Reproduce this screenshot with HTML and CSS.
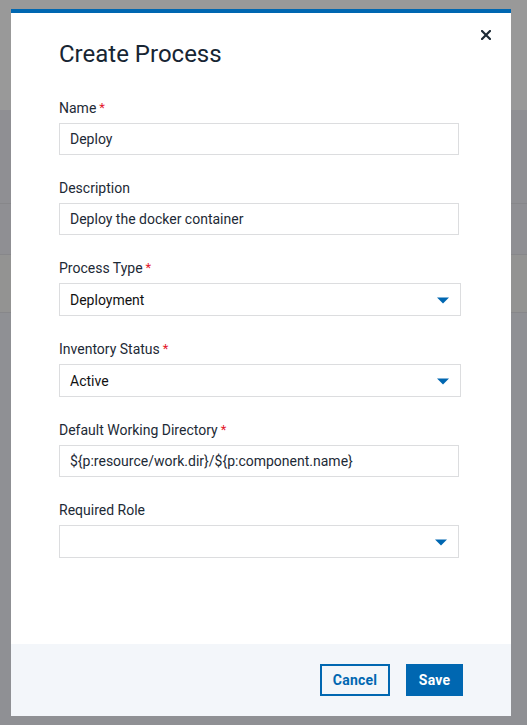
FILE: index.html
```html
<!DOCTYPE html>
<html lang="en">
<head>
<meta charset="utf-8">
<title>Create Process</title>
<link rel="stylesheet" href="styles.css">
</head>
<body>
<div class="page">
  <div class="band band-top"></div>
  <div class="band band-a"></div>
  <div class="band band-b"></div>
  <div class="band band-c"></div>
  <div class="band band-rest"></div>
</div>

<div class="modal" role="dialog" aria-label="Create Process">
  <button class="close" aria-label="Close">
    <svg width="10" height="10" viewBox="0 0 10 10"><path d="M1 1 L9 9 M9 1 L1 9" stroke="#1d2a36" stroke-width="2.2" stroke-linecap="square" fill="none"/></svg>
  </button>
  <div class="modal-body">
    <h1 class="title">Create Process</h1>

    <div class="field">
      <label class="label">Name<span class="req">*</span></label>
      <div class="input">Deploy</div>
    </div>

    <div class="field">
      <label class="label">Description</label>
      <div class="input">Deploy the docker container</div>
    </div>

    <div class="field">
      <label class="label">Process Type<span class="req">*</span></label>
      <div class="select wide">
        <span class="value">Deployment</span>
        <svg class="caret" width="12" height="7" viewBox="0 0 12 7"><path d="M0 0.5 H12 L6 6.5 Z" fill="#0067b1"/></svg>
      </div>
    </div>

    <div class="field">
      <label class="label">Inventory Status<span class="req">*</span></label>
      <div class="select wide">
        <span class="value">Active</span>
        <svg class="caret" width="12" height="7" viewBox="0 0 12 7"><path d="M0 0.5 H12 L6 6.5 Z" fill="#0067b1"/></svg>
      </div>
    </div>

    <div class="field">
      <label class="label">Default Working Directory<span class="req">*</span></label>
      <div class="input">${p:resource/work.dir}/${p:component.name}</div>
    </div>

    <div class="field">
      <label class="label">Required Role</label>
      <div class="select">
        <span class="value"></span>
        <svg class="caret" width="12" height="7" viewBox="0 0 12 7"><path d="M0 0.5 H12 L6 6.5 Z" fill="#0067b1"/></svg>
      </div>
    </div>
  </div>
  <div class="modal-footer">
    <button class="btn btn-secondary">Cancel</button>
    <button class="btn btn-primary">Save</button>
  </div>
</div>
</body>
</html>
```

FILE: styles.css
```css
* { box-sizing: border-box; }

html, body {
  margin: 0;
  padding: 0;
}

body {
  width: 527px;
  height: 725px;
  overflow: hidden;
  font-family: Roboto, "Liberation Sans", sans-serif;
  background: #8f9094;
  position: relative;
}

.page {
  display: flex;
  flex-direction: column;
}

.band { width: 100%; }
.band-top { height: 110px; background: #999999; }
.band-a { height: 94px; background: #8f8f93; border-bottom: 1px solid #87878a; }
.band-b { height: 51px; background: #8f8f93; border-bottom: 1px solid #87878a; }
.band-c { height: 58px; background: #939392; border-bottom: 1px solid #87878a; }
.band-rest { flex: 1; background: #8f9094; }

.modal {
  position: absolute;
  left: 11px;
  top: 9px;
  width: 500px;
  height: 707px;
  background: #ffffff;
  border-top: 4px solid #0067b1;
  display: flex;
  flex-direction: column;
}

.close {
  position: absolute;
  top: 17px;
  right: 20px;
  width: 10px;
  height: 10px;
  padding: 0;
  border: 0;
  background: none;
  display: flex;
}

.modal-body {
  flex: 1;
  padding: 27px 52px 0 48px;
}

.title {
  margin: 0 0 30px;
  font-size: 24px;
  line-height: 28px;
  font-weight: 400;
  color: #172533;
}

.field {
  margin-bottom: 23px;
}

.label {
  display: block;
  height: 20px;
  font-size: 14px;
  line-height: 20px;
  color: #1d2a36;
  margin-bottom: 5px;
}

.req {
  color: #e3172b;
  font-size: 13px;
  line-height: 0;
  margin-left: 3px;
  position: relative;
  top: -1px;
}

.input {
  width: 400px;
  height: 32px;
  border: 1px solid #dcdddf;
  padding: 0 10px;
  font-size: 14px;
  line-height: 30px;
  color: #1d2a36;
  white-space: nowrap;
}

.select {
  width: 400px;
  height: 33px;
  border: 1px solid #dcdddf;
  padding: 0 11px 0 10px;
  display: flex;
  align-items: center;
  justify-content: space-between;
  font-size: 14px;
  color: #111111;
}

.select.wide { width: 402px; }

.caret { display: block; margin-top: 1px; }

.modal-footer {
  height: 72px;
  background: #f3f6fa;
  display: flex;
  justify-content: flex-end;
  align-items: center;
  gap: 16px;
  padding: 0 48px 0 0;
}

.btn {
  height: 32px;
  font-family: Roboto, "Liberation Sans", sans-serif;
  font-size: 14px;
  font-weight: 700;
  letter-spacing: 0.2px;
  cursor: pointer;
}

.btn-secondary {
  width: 70px;
  background: transparent;
  border: 2px solid #0067b1;
  color: #0067b1;
}

.btn-primary {
  width: 57px;
  background: #0067b1;
  border: 2px solid #0067b1;
  color: #ffffff;
}
```
